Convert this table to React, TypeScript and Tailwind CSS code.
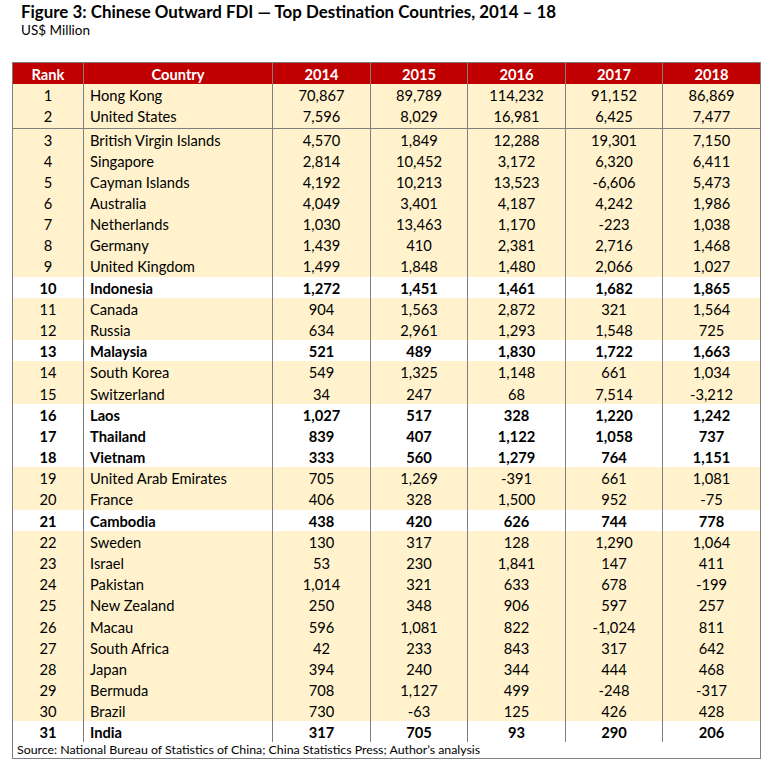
import React from "react";

type Row = [number, string, string, string, string, string, string, boolean, number];

const rows: Row[] = [
  [1, "Hong Kong", "70,867", "89,789", "114,232", "91,152", "86,869", false, 21],
  [2, "United States", "7,596", "8,029", "16,981", "6,425", "7,477", false, 24],
  [3, "British Virgin Islands", "4,570", "1,849", "12,288", "19,301", "7,150", false, 21],
  [4, "Singapore", "2,814", "10,452", "3,172", "6,320", "6,411", false, 21],
  [5, "Cayman Islands", "4,192", "10,213", "13,523", "-6,606", "5,473", false, 21],
  [6, "Australia", "4,049", "3,401", "4,187", "4,242", "1,986", false, 21],
  [7, "Netherlands", "1,030", "13,463", "1,170", "-223", "1,038", false, 21],
  [8, "Germany", "1,439", "410", "2,381", "2,716", "1,468", false, 21],
  [9, "United Kingdom", "1,499", "1,848", "1,480", "2,066", "1,027", false, 22],
  [10, "Indonesia", "1,272", "1,451", "1,461", "1,682", "1,865", true, 21],
  [11, "Canada", "904", "1,563", "2,872", "321", "1,564", false, 21],
  [12, "Russia", "634", "2,961", "1,293", "1,548", "725", false, 21],
  [13, "Malaysia", "521", "489", "1,830", "1,722", "1,663", true, 21],
  [14, "South Korea", "549", "1,325", "1,148", "661", "1,034", false, 22],
  [15, "Switzerland", "34", "247", "68", "7,514", "-3,212", false, 21],
  [16, "Laos", "1,027", "517", "328", "1,220", "1,242", true, 21],
  [17, "Thailand", "839", "407", "1,122", "1,058", "737", true, 21],
  [18, "Vietnam", "333", "560", "1,279", "764", "1,151", true, 21],
  [19, "United Arab Emirates", "705", "1,269", "-391", "661", "1,081", false, 21],
  [20, "France", "406", "328", "1,500", "952", "-75", false, 22],
  [21, "Cambodia", "438", "420", "626", "744", "778", true, 21],
  [22, "Sweden", "130", "317", "128", "1,290", "1,064", false, 21],
  [23, "Israel", "53", "230", "1,841", "147", "411", false, 21],
  [24, "Pakistan", "1,014", "321", "633", "678", "-199", false, 21],
  [25, "New Zealand", "250", "348", "906", "597", "257", false, 22],
  [26, "Macau", "596", "1,081", "822", "-1,024", "811", false, 21],
  [27, "South Africa", "42", "233", "843", "317", "642", false, 21],
  [28, "Japan", "394", "240", "344", "444", "468", false, 21],
  [29, "Bermuda", "708", "1,127", "499", "-248", "-317", false, 21],
  [30, "Brazil", "730", "-63", "125", "426", "428", false, 21],
  [31, "India", "317", "705", "93", "290", "206", true, 21],
];

const cols = "grid grid-cols-[70px_188px_97px_96px_97px_96px_97px] gap-x-px";

export default function App() {
  return (
    <div
      className="w-[770px] h-[765px] bg-white text-black overflow-hidden"
      style={{ fontFamily: "Lato, 'Open Sans', sans-serif" }}
    >
      <div className="pl-[21px] pt-[2px]">
        <div className="text-[16.9px] font-bold leading-[20px]">
          Figure 3: Chinese Outward FDI — Top Destination Countries, 2014 – 18
        </div>
        <div className="text-[13.5px] leading-[16px]">US$ Million</div>
      </div>
      <div className="ml-[12px] mt-[24px] w-[749px] bg-[#7f7f7f] border border-[#7f7f7f] flex flex-col gap-y-px">
        <div className={`${cols} h-[20px]`}>
          {["Rank", "Country", "2014", "2015", "2016", "2017", "2018"].map((h) => (
            <div
              key={h}
              className="bg-[#c00000] text-white font-bold text-[14.7px] flex items-center justify-center"
            >
              {h}
            </div>
          ))}
        </div>
        {rows.map((r) => {
          const bold = r[7];
          const bg = bold ? "bg-white font-bold" : "bg-[#fff2cc]";
          return (
            <div key={r[0]} className={cols} style={{ height: r[8] - 1 }}>
              <div className={`${bg} text-[14.7px] flex items-center justify-center`}>{r[0]}</div>
              <div className={`${bg} text-[14.7px] flex items-center pl-[6px]`}>{r[1]}</div>
              {[r[2], r[3], r[4], r[5], r[6]].map((v, i) => (
                <div key={i} className={`${bg} text-[14.7px] flex items-center justify-center`}>
                  {v}
                </div>
              ))}
            </div>
          );
        })}
        <div className="bg-white h-[16px] text-[12.35px] leading-[16px] pl-[4px]">
          Source: National Bureau of Statistics of China; China Statistics Press; Author’s analysis
        </div>
      </div>
    </div>
  );
}
